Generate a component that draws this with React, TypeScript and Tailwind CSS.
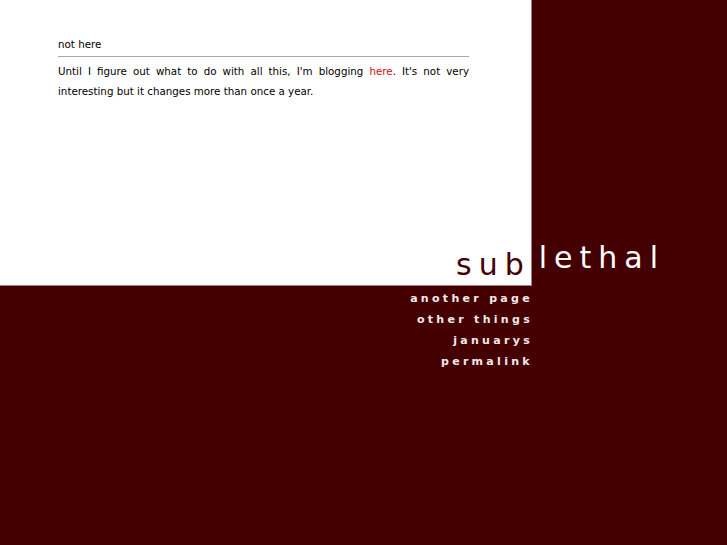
import React from "react";

const links = ["another page", "other things", "januarys", "permalink"];

export default function App() {
  return (
    <div className="min-h-[545px] w-full bg-[#440000] font-['DejaVu_Sans',sans-serif]">
      {/* white content panel */}
      <div className="flex h-[286px] w-[532px] flex-col border-r border-b border-[#a08080] bg-white">
        <div className="box-content w-[411px] pl-[58px] pt-[37px]">
          <div className="pb-[5px] text-[10.3px] leading-[14px] text-black">not here</div>
          <div className="border-t border-[#aaaaaa]" />
          <p className="pt-[4px] text-justify text-[10.3px] leading-[20px] text-black">
            Until I figure out what to do with all this, I'm blogging{" "}
            <a href="#" className="text-[#cc1111]">here</a>. It's not very interesting but it changes more than once a year.
          </p>
        </div>
        <div className="mt-auto flex justify-end">
          <h1 className="-mr-[134px] flex items-end whitespace-nowrap pb-[2px] text-[30px] leading-[36px] tracking-[7px]">
            <span className="text-[#440000]">sub</span>
            <span className="mb-[7px] ml-[8px] text-white">lethal</span>
          </h1>
        </div>
      </div>

      {/* navigation */}
      <ul className="flex w-[531px] flex-col items-end pt-[2px]">
        {links.map((l) => (
          <li key={l} className="-mr-[2px] text-[11px] font-bold leading-[21px] tracking-[3.3px] text-[#f4e8e8]">
            <a href="#">{l}</a>
          </li>
        ))}
      </ul>
    </div>
  );
}
